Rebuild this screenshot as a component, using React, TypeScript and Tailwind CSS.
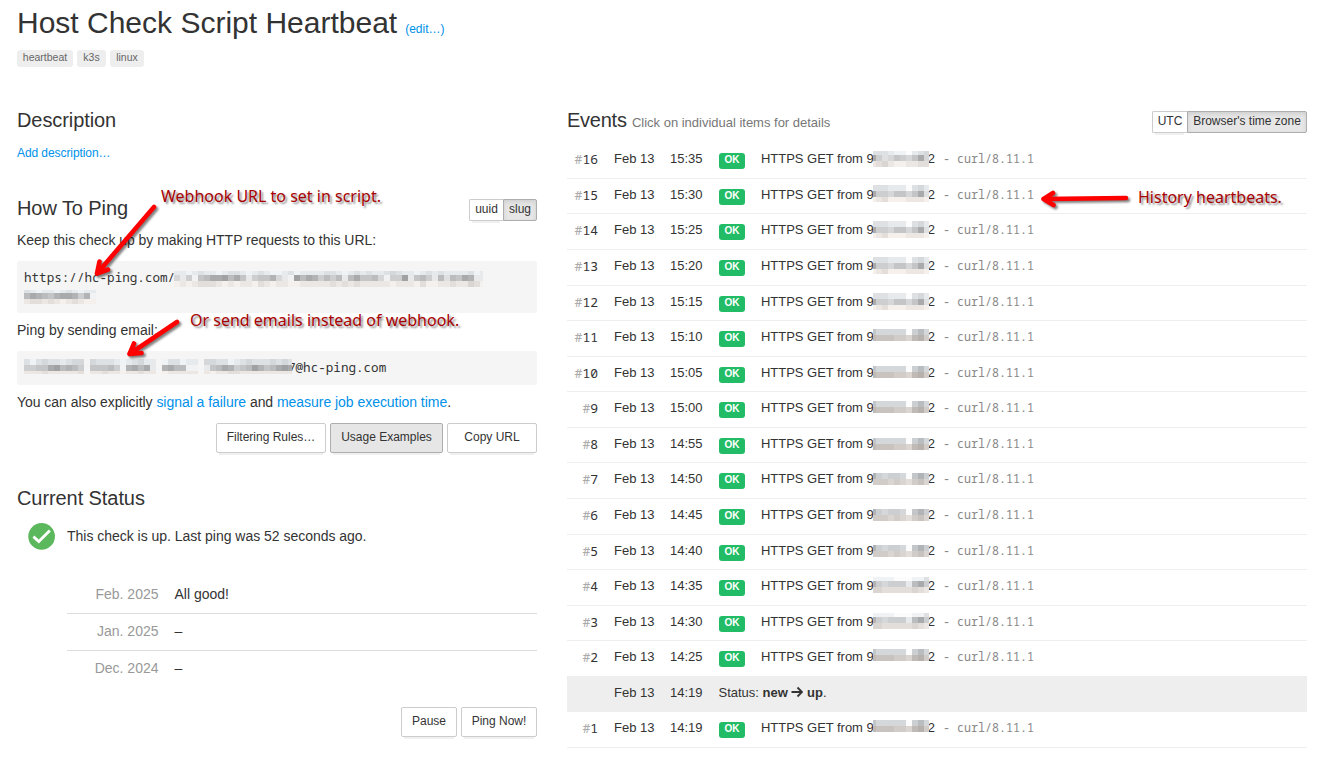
import type { ReactNode } from "react";

type Tint = "cool" | "neutral" | "warm";
const tints: Record<Tint, [number, number, number]> = {
  cool: [-1, 2, 4],
  neutral: [0, 1, 3],
  warm: [4, -1, -5],
};

interface Strip {
  cells: string;
  tint: Tint;
  height?: number;
}

/* Pixelated block that hides private text. Each digit is a cell from dark (0) to light (9). */
function Mosaic({ strips, firstWidth = 6, lastWidth = 6, className }: { strips: Strip[]; firstWidth?: number; lastWidth?: number; className: string }) {
  const count = strips[0].cells.length;
  const width = firstWidth + (count - 2) * 6 + lastWidth;
  const total = strips.reduce((sum, s) => sum + (s.height ?? 6), 0);
  let y = 0;
  return (
    <svg className={className} width={width} height={total} shapeRendering="crispEdges">
      {strips.map((strip, r) => {
        const h = strip.height ?? 6;
        const top = y;
        y += h;
        return strip.cells.split("").map((c, i) => {
          if (c === ".") return null;
          const level = 160 + Number(c) * 9;
          const [dr, dg, db] = tints[strip.tint];
          const w = i === 0 ? firstWidth : i === count - 1 ? lastWidth : 6;
          return (
            <rect
              key={`${r}-${i}`}
              x={i === 0 ? 0 : firstWidth + (i - 1) * 6}
              y={top}
              width={w}
              height={h}
              fill={c === "w" ? "#fcfcfc" : `rgb(${level + dr},${level + dg},${level + db})`}
            />
          );
        });
      })}
    </svg>
  );
}

const bandHigh: Strip[] = [
  { cells: "777899w876", tint: "cool", height: 4 },
  { cells: "1576456416", tint: "neutral" },
  { cells: "8768998877", tint: "warm" },
];
const bandCentre: Strip[] = [
  { cells: "777888w768", tint: "cool" },
  { cells: "1556446417", tint: "neutral" },
  { cells: "9879998889", tint: "warm", height: 5 },
];
const bandTwo: Strip[] = [
  { cells: "466666w536", tint: "cool" },
  { cells: "3444556325", tint: "warm" },
];
const bandLow: Strip[] = [
  { cells: "256556w425", tint: "cool" },
  { cells: "5556567546", tint: "warm" },
];
const bandFaint: Strip[] = [
  { cells: "9999www997", tint: "cool", height: 4 },
  { cells: "2565558315", tint: "neutral" },
  { cells: "6677777678", tint: "warm" },
];

interface EventRow {
  n: number;
  time: string;
  height: string;
  band: Strip[];
  top: string;
}

const H36 = "h-[36px]";
const H35 = "h-[35px]";
const events: EventRow[] = [
  { n: 16, time: "15:35", height: H36, band: bandHigh, top: "top-[8px]" },
  { n: 15, time: "15:30", height: H35, band: bandCentre, top: "top-[6px]" },
  { n: 14, time: "15:25", height: H36, band: bandCentre, top: "top-[7px]" },
  { n: 13, time: "15:20", height: H36, band: bandCentre, top: "top-[7px]" },
  { n: 12, time: "15:15", height: H35, band: bandCentre, top: "top-[7px]" },
  { n: 11, time: "15:10", height: H36, band: bandTwo, top: "top-[8px]" },
  { n: 10, time: "15:05", height: H35, band: bandTwo, top: "top-[9px]" },
  { n: 9, time: "15:00", height: H36, band: bandTwo, top: "top-[9px]" },
  { n: 8, time: "14:55", height: H35, band: bandTwo, top: "top-[10px]" },
  { n: 7, time: "14:50", height: H36, band: bandLow, top: "top-[10px]" },
  { n: 6, time: "14:45", height: H36, band: bandLow, top: "top-[10px]" },
  { n: 5, time: "14:40", height: H35, band: bandLow, top: "top-[10px]" },
  { n: 4, time: "14:35", height: H36, band: bandFaint, top: "top-[7px]" },
  { n: 3, time: "14:30", height: H35, band: bandFaint, top: "top-[7px]" },
  { n: 2, time: "14:25", height: H36, band: bandTwo, top: "top-[8px]" },
];
const firstEvent: EventRow = { n: 1, time: "14:19", height: H36, band: bandTwo, top: "top-[8px]" };

const mono = "font-['Noto_Sans_Mono','DejaVu_Sans_Mono',monospace]";

function EventItem({ row }: { row: EventRow }) {
  return (
    <div className={`relative flex shrink-0 border-b border-[#eee] text-[13px] leading-[32px] whitespace-pre ${row.height}`}>
      <span className={`w-[31px] text-right ${mono}`}>
        <span className="text-[#aaa]">#</span>{row.n}
      </span>
      <span className="ml-4 w-14">Feb 13</span>
      <span className="w-12">{row.time}</span>
      <span className="mt-[10px] mr-4 ml-px h-4 w-[26px] rounded-[3px] bg-[#22bc66] text-center text-[10px] leading-[13px] font-bold text-white">OK</span>
      <span className="tracking-[-0.03px]">HTTPS GET from 9</span>
      <span className="w-[54px]" />
      <span>2</span>
      <span className={`ml-[8px] text-[11.7px] leading-[30px] text-[#888] ${mono}`}>- curl/8.11.1</span>
      <Mosaic strips={row.band} firstWidth={3} lastWidth={5} className={`absolute left-[306px] ${row.top}`} />
    </div>
  );
}

function Button({ children, className = "" }: { children: ReactNode; className?: string }) {
  return (
    <button className={`h-[30px] rounded-[2px] border pb-[3px] text-[12px] leading-[18px] shadow-[0_5px_0_-3px_rgba(0,0,0,0.06)] ${className}`}>
      {children}
    </button>
  );
}

function Toggle({ left, right, leftClass, rightClass }: { left: string; right: string; leftClass: string; rightClass: string }) {
  return (
    <div className="flex h-[22px] text-[12px] leading-[18px]">
      <span className={`rounded-l-[2px] border border-r-0 border-[#ccc] bg-white text-center shadow-[0_5px_0_-3px_rgba(0,0,0,0.06)] ${leftClass}`}>{left}</span>
      <span className={`rounded-r-[2px] border border-[#adadad] bg-[#e6e6e6] text-center shadow-[inset_0_2px_4px_rgba(0,0,0,0.1)] ${rightClass}`}>{right}</span>
    </div>
  );
}

const months = [
  { name: "Feb. 2025", status: "All good!" },
  { name: "Jan. 2025", status: "–" },
  { name: "Dec. 2024", status: "–" },
];

function Tag({ children, className }: { children: string; className: string }) {
  return <span className={`h-[17px] rounded-[3px] bg-[#eee] text-center text-[10.5px] leading-[15px] text-[#666] ${className}`}>{children}</span>;
}

export default function App() {
  return (
    <div className="relative h-[757px] w-[1334px] overflow-hidden bg-white pl-[17px] font-['Liberation_Sans',Arial,sans-serif] text-[14px] text-[#333]">
      <header className="h-[108px]">
        <h1 className="flex h-[50px] items-baseline text-[30px] leading-[46px]">
          Host Check Script Heartbeat
          <a className="ml-2 text-[12px] text-[#0091ea]">(edit…)</a>
        </h1>
        <div className="flex gap-1">
          <Tag className="w-14">heartbeat</Tag>
          <Tag className="w-[29px]">k3s</Tag>
          <Tag className="w-[34px]">linux</Tag>
        </div>
      </header>

      <main className="flex gap-[30px]">
        <section className="flex w-[520px] flex-col">
          <h2 className="text-[20px] leading-6 tracking-[-0.08px]">Description</h2>
          <a className="mt-[11px] text-[12px] leading-5 tracking-[-0.08px] text-[#0091ea]">Add description…</a>

          <div className="mt-[33px] flex h-[34px] items-start justify-between">
            <h2 className="text-[20px] leading-6 tracking-[-0.08px]">How To Ping</h2>
            <div className="mt-[3px]">
              <Toggle left="uuid" right="slug" leftClass="w-[34px]" rightClass="w-[34px]" />
            </div>
          </div>
          <p className="leading-5 tracking-[-0.03px]">Keep this check up by making HTTP requests to this URL:</p>
          <div className={`relative mt-[11px] h-[52px] rounded-[3px] bg-[#f5f5f5] px-[7px] pt-2 text-[12.6px] leading-[18px] ${mono}`}>
            https://hc-ping.com/
            <Mosaic
              className="absolute top-[10px] left-[157px]"
              lastWidth={3}
              strips={[
                { cells: "8898788987789878998798888778987878876788987878888798", tint: "cool", height: 4 },
                { cells: "6859431103148544268903125353831443695508435837341288", tint: "neutral" },
                { cells: "9898777898988978988998888878787888889888979988788679", tint: "warm" },
              ]}
            />
            <Mosaic
              className="absolute top-[29px] left-[7px]"
              strips={[
                { cells: "789889878988", tint: "cool", height: 3 },
                { cells: "312342112529", tint: "neutral" },
                { cells: "877878987899", tint: "warm", height: 5 },
              ]}
            />
          </div>
          <p className="mt-[7px] leading-5">Ping by sending email:</p>
          <div className={`relative mt-[11px] h-[34px] rounded-[3px] bg-[#f5f5f5] pl-[271px] text-[12.6px] leading-[33px] ${mono}`}>
            7@hc-ping.com
            <Mosaic
              className="absolute top-2 left-[7px]"
              lastWidth={4}
              strips={[
                { cells: "7976778766.67778987688.977988.667798767776767", tint: "cool" },
                { cells: "5544103235.44435921318.213399.843125430243101", tint: "neutral" },
                { cells: "8887888887.88788988788.988888.898877888888888", tint: "warm", height: 3 },
              ]}
            />
          </div>
          <p className="mt-[7px] leading-5 tracking-[-0.04px]">
            You can also explicitly <a className="text-[#0091ea]">signal a failure</a> and{" "}
            <a className="text-[#0091ea]">measure job execution time</a>.
          </p>
          <div className="mt-[11px] flex justify-end gap-1">
            <Button className="w-[110px] border-[#ccc] bg-white">Filtering Rules…</Button>
            <Button className="w-[113px] border-[#adadad] bg-[#e6e6e6]">Usage Examples</Button>
            <Button className="w-[90px] border-[#ccc] bg-white">Copy URL</Button>
          </div>

          <h2 className="mt-[33px] text-[20px] leading-6 tracking-[-0.08px]">Current Status</h2>
          <div className="mt-3 flex h-7 items-center pl-[11px]">
            <svg width="28" height="28" viewBox="0 0 28 28">
              <circle cx="13.6" cy="14.4" r="13.3" fill="#5cb85c" />
              <path d="M5.4 14.6 L10.8 19.6 L21.8 8.4" fill="none" stroke="#fff" strokeWidth="2.8" />
            </svg>
            <span className="ml-[11px] leading-7 tracking-[-0.02px]">This check is up. Last ping was 52 seconds ago.</span>
          </div>

          <div className="mt-[27px] ml-[50px] divide-y divide-[#ddd]">
            {months.map((m) => (
              <div key={m.name} className="flex h-[37px] gap-4 leading-[35px]">
                <span className="w-[91.5px] text-right text-[#999]">{m.name}</span>
                <span>{m.status}</span>
              </div>
            ))}
          </div>
          <div className="mt-[19px] flex justify-end gap-1">
            <Button className="w-14 border-[#ccc] bg-white">Pause</Button>
            <Button className="w-19 border-[#ccc] bg-white">Ping Now!</Button>
          </div>
        </section>

        <section className="flex w-[740px] flex-col">
          <div className="flex h-[35px] items-start justify-between">
            <h2 className="text-[20px] leading-6 tracking-[-0.25px]">
              Events <small className="text-[13px] tracking-[-0.01px] text-[#777]">Click on individual items for details</small>
            </h2>
            <div className="mt-[3px]">
              <Toggle left="UTC" right="Browser's time zone" leftClass="w-[35px]" rightClass="w-[120px]" />
            </div>
          </div>
          {events.map((row) => (
            <EventItem key={row.n} row={row} />
          ))}
          <div className="flex h-[35px] shrink-0 bg-[#eee] text-[13px] leading-[31px]">
            <span className="ml-[47px] w-14">Feb 13</span>
            <span className="w-[48.5px]">14:19</span>
            <span className="flex whitespace-pre">
              Status: <b>new </b>
              <svg className="mt-[9px]" width="12" height="12" viewBox="0 0 12 12" fill="none" stroke="#333" strokeWidth="1.8">
                <path d="M0.5 6 H11 M6.5 1.5 L11 6 L6.5 10.5" />
              </svg>
              <b> up</b>.
            </span>
          </div>
          <EventItem row={firstEvent} />
        </section>
      </main>

      <div className="pointer-events-none absolute inset-0 font-['Noto_Sans',sans-serif] text-[16px] leading-6 whitespace-nowrap text-[#a80000] [text-shadow:2px_2px_2px_rgba(0,0,0,0.45)]">
        <svg className="absolute inset-0 drop-shadow-[2px_2px_1px_rgba(0,0,0,0.5)]" width="1334" height="757" fill="none" stroke="#f00" strokeWidth="4.6" strokeLinecap="round" strokeLinejoin="round">
          <path d="M154 207 L97 273.500 M99.500 261.500 L97 273.500 L108 269.500" />
          <path d="M177 322 L129.500 354 M134 343.500 L129.500 354 L141.500 353" />
          <path d="M1126 198 L1043.500 199 M1053 193 L1043.500 199 L1053.500 205" />
        </svg>
        <span className="absolute top-[184px] left-[161px]">Webhook URL to set in script.</span>
        <span className="absolute top-[308px] left-[190px]">Or send emails instead of webhook.</span>
        <span className="absolute top-[185px] left-[1138px]">History heartbeats.</span>
      </div>
    </div>
  );
}
